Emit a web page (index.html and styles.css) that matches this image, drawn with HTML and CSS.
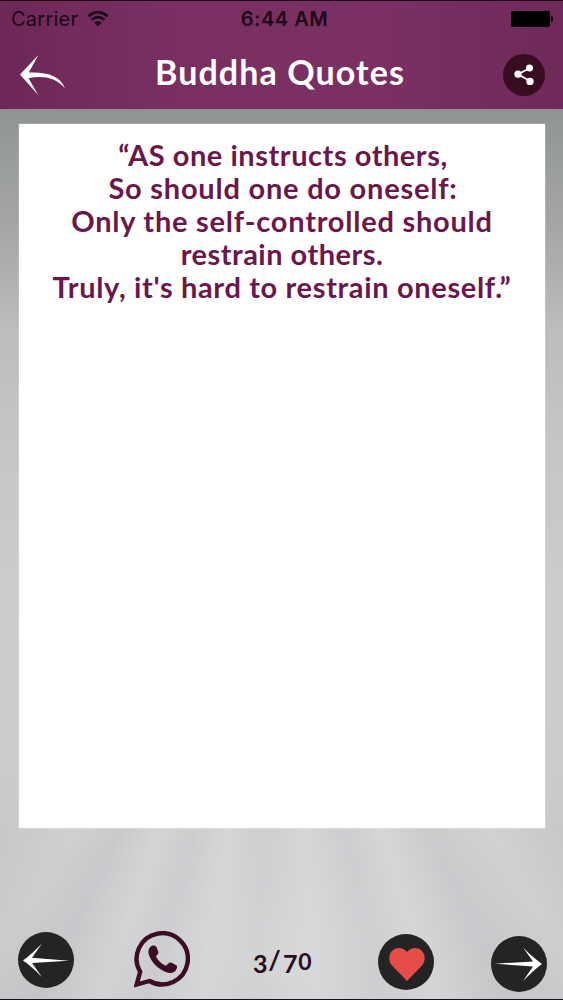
FILE: index.html
```
<!DOCTYPE html>
<html lang="en">
<head>
    <meta charset="UTF-8">
    <meta name="viewport" content="width=device-width, initial-scale=1.0">
    <title>Buddha Quotes</title>
    <link rel="stylesheet" href="styles.css">
</head>
<body>
    <div class="app">
        <header class="header">
            <div class="status-bar">
                <div class="carrier">
                    <span>Carrier</span>
                    <svg class="wifi" viewBox="0 0 22 16">
                        <path d="M1.4 5.1 Q11 -3 20.6 5.1" fill="none" stroke="currentColor" stroke-width="2.7"/>
                        <path d="M4.7 8.8 Q11 3.4 17.3 8.8" fill="none" stroke="currentColor" stroke-width="2.7"/>
                        <path d="M7.3 11.8 Q11 8.4 14.7 11.8 L11 15.6 Z" fill="currentColor"/>
                    </svg>
                </div>
                <span class="time">6:44 AM</span>
                <div class="battery"></div>
            </div>
            <div class="title-bar">
                <button class="icon-button back-button" aria-label="Back">
                    <svg viewBox="0 0 46 42" width="46" height="42">
                        <path d="M18.4 1 L0 20.5 L18.2 41 L8.5 24.2 C22 21.5 36 23 45 34.5 C41 22 26 17.5 8.8 18.6 Z" fill="#fff"/>
                    </svg>
                </button>
                <h1 class="title">Buddha Quotes</h1>
                <button class="icon-button share-button" aria-label="Share">
                    <svg viewBox="0 0 20 22" width="20" height="22">
                        <path d="M16 4 L4 10.2 L16.4 17.2" fill="none" stroke="#fff" stroke-width="1.7"/>
                        <circle cx="15.5" cy="4" r="3.5" fill="#fff"/>
                        <circle cx="4" cy="10.2" r="3.6" fill="#fff"/>
                        <circle cx="16" cy="17.4" r="3.7" fill="#fff"/>
                    </svg>
                </button>
            </div>
        </header>

        <main class="card">
            <p class="quote">
                <span class="line line-1">“AS one instructs others,</span>
                <span class="line line-2">So should one do oneself:</span>
                <span class="line line-3">Only the self-controlled should</span>
                <span class="line line-4">restrain others.</span>
                <span class="line line-5">Truly, it's hard to restrain oneself.”</span>
            </p>
        </main>

        <footer class="toolbar">
            <button class="icon-button round prev" aria-label="Previous">
                <svg viewBox="0 0 56 56" width="56" height="56">
                    <path d="M24 11.5 C17 18.5 11 24 5 28.5 C11 32.5 17 38 24 45 L14 30.9 L51 28.8 L14 25.7 Z" fill="#fff"/>
                </svg>
            </button>
            <button class="icon-button whatsapp" aria-label="WhatsApp">
                <svg viewBox="0 0 56 57" width="56" height="57">
                    <path d="M2.6 53.6 L6.2 40.8 A25.6 25.6 0 1 1 15.5 50 Z" fill="none" stroke="#3c0c25" stroke-width="4.4" stroke-linejoin="miter"/>
                    <path d="M16.5 15.7 C18.5 13.8 21.5 14.2 22.4 16 L24.2 20.5 C24.8 22 24.2 23 22 25.2 C24 29.8 27.6 32.9 31.8 34.8 L35 32 C36 31.2 37.2 31.5 38.2 32 L42.3 34.3 C43.9 35.4 42.9 38.8 40.5 40.7 C37.2 43 32.5 42.2 27 38.5 C20.6 34.5 16.4 29 14.8 23.5 C13.8 20 14.6 17.5 16.5 15.7 Z" fill="#3c0c25"/>
                </svg>
            </button>
            <div class="counter"><span class="low">3</span><span class="slash">/</span><span class="low">7</span><span class="zero">0</span></div>
            <button class="icon-button round favorite" aria-label="Favorite">
                <svg viewBox="0 0 56 56" width="56" height="56">
                    <path d="M29 47 L14 31.5 C10.2 27 10.5 20 14.5 16.5 C19 12.6 25.5 13.5 29 18 C32.5 13.5 39 12.6 43.5 16.5 C47.5 20 47.8 27 44 31.5 Z" fill="#e64c48"/>
                </svg>
            </button>
            <button class="icon-button round next" aria-label="Next">
                <svg viewBox="0 0 56 56" width="56" height="56">
                    <path d="M32 11.5 C39 18.5 45 23.5 51 28 C45 32.5 39 38 32 45 L42 30.5 L4 27.8 L42 25.4 Z" fill="#fff"/>
                </svg>
            </button>
        </footer>
    </div>
</body>
</html>
```
FILE: styles.css
```
* {
    box-sizing: border-box;
}

body {
    margin: 0;
    font-family: 'Lato', sans-serif;
}

.app {
    width: 563px;
    height: 1000px;
    display: flex;
    flex-direction: column;
    overflow: hidden;
    border-bottom: 1px solid #16141a;
    /* soft light rays over a grey wall */
    background:
        radial-gradient(ellipse 300px 260px at 50% 96%, rgba(228, 229, 231, 0.5), transparent),
        conic-gradient(from 140deg at 50% 50%,
            rgba(255, 255, 255, 0) 0deg, rgba(255, 255, 255, 0.14) 8deg,
            rgba(120, 125, 130, 0.03) 16deg, rgba(255, 255, 255, 0.18) 23deg,
            rgba(120, 125, 130, 0.03) 29deg, rgba(255, 255, 255, 0.16) 36deg,
            rgba(120, 125, 130, 0.03) 43deg, rgba(255, 255, 255, 0.16) 49deg,
            rgba(120, 125, 130, 0.04) 55deg, rgba(255, 255, 255, 0.16) 60deg,
            rgba(120, 125, 130, 0.04) 66deg, rgba(255, 255, 255, 0.1) 72deg,
            rgba(255, 255, 255, 0) 80deg, rgba(255, 255, 255, 0) 360deg),
        linear-gradient(#8f9493 109px, #969999 140px, #a5a6a8 230px, #bcbdbf 330px, #c4c6c8 450px, #cccdcf 620px, #cacbcd 780px, #c6c7c9 870px, #c2c4c6 1000px);
}

.header {
    height: 109px;
    flex: none;
    border-top: 1px solid #210718;
    background: linear-gradient(90deg, #6d2857, #792f62 30%, #7b3064 65%, #6e2959);
}

.status-bar {
    height: 36px;
    display: grid;
    grid-template-columns: 1fr auto 1fr;
    align-items: center;
    padding: 0 10px 0 11px;
    font-family: 'Inter', sans-serif;
    font-size: 20px;
    color: #1d0618;
}

.carrier {
    display: flex;
    align-items: center;
    gap: 9px;
    letter-spacing: 0.25px;
}

.wifi {
    width: 22px;
    height: 16px;
}

.time {
    padding-left: 5px;
    font-weight: 600;
    letter-spacing: 0.55px;
}

.battery {
    justify-self: end;
    width: 39px;
    height: 16px;
    margin-right: 3px;
    border-radius: 2px;
    background: #000;
    position: relative;
}

.battery::after {
    content: '';
    position: absolute;
    top: 5px;
    right: -3px;
    width: 2px;
    height: 6px;
    border-radius: 0 2px 2px 0;
    background: #000;
}

.title-bar {
    height: 72px;
    display: flex;
    align-items: center;
    justify-content: space-between;
    padding: 0 18px 0 20px;
}

.title {
    margin: 0 9px 2px 0;
    font-size: 34px;
    line-height: 40px;
    font-weight: 700;
    letter-spacing: 1.1px;
    color: #fff;
}

.icon-button {
    display: flex;
    align-items: center;
    justify-content: center;
    padding: 0;
    border: none;
    background: none;
    cursor: pointer;
}

.back-button {
    padding-top: 3px;
}

.share-button {
    width: 42px;
    height: 42px;
    margin-top: 3px;
    border-radius: 50%;
    background: #390d20;
}

.card {
    width: 526px;
    height: 704px;
    flex: none;
    margin: 15px 0 0 19px;
    padding-top: 14px;
    background: #fff;
    box-shadow: 0 0 1px rgba(255, 255, 255, 0.9);
}

.quote {
    margin: 0;
    text-align: center;
    font-size: 29px;
    line-height: 33px;
    font-weight: 700;
    color: #6b174b;
}

.line {
    display: block;
    white-space: nowrap;
}

.line-1 {
    padding-left: 2px;
    letter-spacing: 0.53px;
}

.line-2 {
    padding-left: 2px;
    letter-spacing: 0.77px;
}

.line-3 {
    letter-spacing: 0.76px;
}

.line-4 {
    letter-spacing: 0.48px;
}

.line-5 {
    letter-spacing: 0.65px;
}

.toolbar {
    flex: 1;
    display: flex;
    align-items: flex-start;
    padding: 104px 16px 0 18px;
}

.round {
    width: 56px;
    height: 56px;
    border-radius: 50%;
    background: #242425;
}

.whatsapp {
    margin: -1px 0 0 60px;
}

.counter {
    width: 64px;
    height: 56px;
    margin-left: 63px;
    line-height: 56px;
    font-size: 25px;
    font-weight: 700;
    letter-spacing: 0.8px;
    color: #2c0c1e;
    white-space: nowrap;
}

.low {
    vertical-align: -3px;
}

.slash {
    font-size: 27px;
    letter-spacing: 2px;
}

.zero {
    font-size: 23px;
}

.favorite {
    margin: 2px 0 0 61px;
}

.next {
    margin: 4px 0 0 57px;
}
```
